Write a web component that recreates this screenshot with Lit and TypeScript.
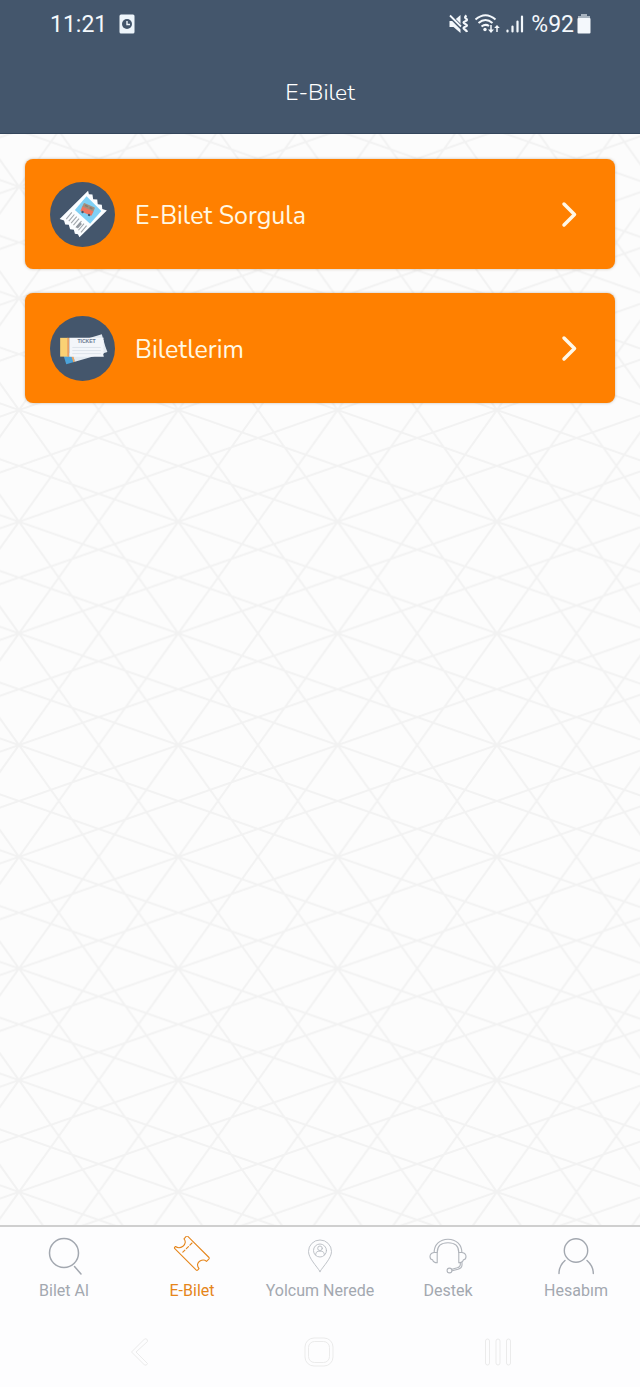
import { LitElement, html, css, svg, TemplateResult } from "lit";
import { customElement } from "lit/decorators.js";
import { classMap } from "lit/directives/class-map.js";

const queryTicket = svg`
  <circle cx="32" cy="32" r="32" fill="#44566c"/>
  <path d="M37.500 8.500L38.300 12L41.800 12.300L42.500 17L46.500 17.300L47 22L51 22.300L51.500 26.500L56 28L29 54.500L27.500 51.500L24.500 51L23.500 47L19.800 46.500L18.500 42L15 41.800L13.800 37.800L9.500 36.500Z" fill="#fbfdff"/>
  <path d="M36 14L50.500 28.500L39.500 41L24.500 27.500Z" fill="#7fd0f5"/>
  <g transform="rotate(24 36 27)">
    <rect x="31" y="22" width="12" height="6" rx="1" fill="#a58f7c"/>
    <path d="M31 26h12v4a1 1 0 0 1-1 1H32a1 1 0 0 1-1-1z" fill="#ef7660"/>
    <path d="M33 24h3M38 24h3" stroke="#8b7a70" stroke-width="1.500"/>
    <circle cx="33.500" cy="31" r="1.200" fill="#44566c"/><circle cx="40.500" cy="31" r="1.200" fill="#44566c"/>
  </g>
  <path d="M21.500 30l-5.500 6.500M24 32l-5.500 6.500M26.300 34l-5.500 6.500M28.600 36l-5.500 6.500M31 38.500l-5.500 6.500M33.500 41l-5.500 6.500M36 43l-5.500 6.500" stroke="#a3a8ad" stroke-width="1.100"/>
  <path d="M30.500 40.500l-4 4.500" stroke="#9298a0" stroke-width="2.500"/>`;

const ticketPair = svg`
  <circle cx="32" cy="32" r="32" fill="#44566c"/>
  <path d="M13 38l3 9.500 8.500-2.500-3-9z" fill="#4ba3da"/>
  <path d="M20.500 38l2.500 7.500 1.500-.5-2-8z" fill="#f2a55c"/>
  <path d="M22 36l2.500 9L44 39.500l12.500-4L54.500 30L51 18L38 22z" fill="#e3eaf1"/>
  <rect x="10" y="21.500" width="8" height="18.500" fill="#fad174"/>
  <rect x="17" y="21.500" width="2" height="18.500" fill="#e9a163"/>
  <path d="M19 21.500h34l-.6 1.500.6 1.500-.6 1.500.6 1.500-.6 1.500.6 1.500-.6 1.500.6 1.500-.6 1.500.6 1.500-.6 1.500.6 2H19z" fill="#f3f6fa"/>
  <path d="M22 31h28M22 34h28M22 37h28" stroke="#d9e0e8" stroke-width=".8"/>
  <text x="27" y="27" class="stamp">TICKET</text>`;

interface Tab { label: string; icon: TemplateResult; active?: boolean; }

const tabs: Tab[] = [
  { label: "Bilet Al", icon: svg`<circle cx="20" cy="17" r="14.500" stroke-width="1.500"/><path d="M30.500 30.500l6.500 7.500" stroke-width="1.500"/>` },
  { label: "E-Bilet", active: true, icon: svg`<path d="M3.500 10.500L2.600 11.400Q2.200 12 2.800 12.600L24.300 34.200Q25 34.800 25.600 34.200L27 32.600C24.500 29.500 25.500 26.500 28 25C30.500 23.500 33 24 34.500 25.300L37 22.800Q37.500 22.100 37 21.500L15.600 .200Q15-.500 14.400 .200L12 2.800C14 5 13.500 8.500 11 10.200C8.500 12 5.500 12 3.500 10.500Z"/><path d="M20 7L9.500 17.500" stroke-dasharray="3 2"/>` },
  { label: "Yolcum Nerede", icon: svg`<g stroke-width=".9" opacity=".75"><path d="M20 35.500C16.500 30 8.500 22 8.500 15.500a11.500 11.500 0 0 1 23 0C31.500 22 23.500 30 20 35.500z"/><circle cx="20" cy="14.500" r="6.500"/><circle cx="20" cy="12.300" r="2.300"/><path d="M15.700 19v-.8q0-2 2.300-3h4q2.300 1 2.300 3v.8"/></g>` },
  { label: "Destek", icon: svg`<g opacity=".85"><path d="M6.200 16.500C6 8.500 12 3.200 20 3.200s14 5.300 13.800 13.300"/><path d="M9.200 16.500C9.200 10.500 13 6.700 20 6.700s10.800 3.800 10.800 9.800"/><path d="M9.200 16.500v10.300c-3 0-4-1-4.700-3C2.500 23.500 2 22 2 20.500c0-2 1.500-3.500 4-4zM30.800 16.500v10.300c3 0 4-1 4.700-3 2-.3 2.500-1.800 2.500-3.300 0-2-1.500-3.500-4-4z"/><path d="M34 26.500v2.500q0 3-4 4.200l-5.800 1.600M32.300 26.700v2q0 2-3 3l-5.300 1.500"/><circle cx="21.500" cy="34.500" r="2.400"/></g>` },
  { label: "Hesabım", icon: svg`<circle cx="20" cy="14.500" r="11.700" stroke-width="1.400"/><path d="M9 24.500C5 28 3 32 3 37.500M31 24.500c4 3.500 6.300 7.500 6.300 13" stroke-width="1.400"/>` },
];

@customElement("app-root")
export class AppRoot extends LitElement {
  static styles = css`
    :host { display: block; }
    * { box-sizing: border-box; }
    .page { min-height: 100vh; display: flex; flex-direction: column; background: #fdfdfe; font-family: Roboto, sans-serif; }
    .top { background: #44566c; color: #fff; border-bottom: 1px solid #34465c; }
    .status { height: 48px; padding: 0 49px 0 50px; display: flex; align-items: center; justify-content: space-between; font-size: 23px; line-height: 28px; color: #f4f8fc; }
    .cluster { display: flex; align-items: center; gap: 3px; }
    .clock { gap: 12px; }
    .reading { padding-top: 2px; }
    .signals { display: flex; align-items: center; gap: 4px; padding-right: 4px; }
    svg { display: block; flex: none; }
    .title { margin: 0; height: 85px; padding-top: 4px; line-height: 81px; text-align: center; font-family: Nunito, Lato, sans-serif; font-weight: 300; font-size: 23px; }
    .main { flex: 1; position: relative; padding: 25px; background: #fcfcfc; }
    .lattice { position: absolute; inset: 0; width: 100%; height: 100%; }
    .cards { position: relative; display: grid; gap: 24px; }
    .card { display: flex; align-items: center; gap: 20px; height: 110px; padding: 0 36px 0 25px; border-radius: 8px; background: #ff8000; color: #fff8e4; text-decoration: none; font-family: Nunito, Lato, sans-serif; font-size: 25px; line-height: 32px; box-shadow: 0 0 3px rgba(90, 60, 20, .35); }
    .name { flex: 1; padding-top: 4px; }
    .stamp { font: 700 5px "Liberation Sans", sans-serif; fill: #6a788f; }
    .tabs { display: grid; grid-template-columns: repeat(5, 1fr); height: 92px; border-top: 2px solid #cfcfcf; background: #fdfdfe; }
    .tab { display: flex; flex-direction: column; align-items: center; gap: 5px; padding: 9px 0 0; color: #a3a8b0; text-decoration: none; font-size: 16px; line-height: 20px; white-space: nowrap; }
    .active { color: #e5851a; }
    .system { display: grid; grid-template-columns: repeat(3, 1fr); height: 70px; padding: 0 52px 0 50px; background: #fdfdfe; }
    .key { display: grid; place-items: center; border: 0; padding: 0; background: none; color: #ebebeb; }
  `;

  private card(icon: TemplateResult, name: string) {
    return html`<a class="card" href="#">
      <svg width="65" height="65" viewBox="0 0 64 64" aria-hidden="true">${icon}</svg>
      <span class="name">${name}</span>
      <svg width="20" height="28" viewBox="0 0 20 28" fill="none" stroke="#fff8e8" stroke-width="3.500" stroke-linecap="round" stroke-linejoin="round" aria-hidden="true"><path d="M5 4L15.500 14.500L5 25"/></svg>
    </a>`;
  }

  render() {
    return html`<div class="page">
      <header class="top">
        <div class="status">
          <div class="cluster clock">
            <span class="reading">11:21</span>
            <svg width="16" height="20" viewBox="0 0 16 20"><rect x=".5" y=".5" width="15" height="19" rx="1.500" fill="#eef5fb"/><circle cx="8" cy="10" r="5" fill="#44566c"/><path d="M8 7v3.500h3" fill="none" stroke="#eef5fb" stroke-width="1.400"/></svg>
          </div>
          <div class="cluster">
            <div class="signals">
              <svg width="22" height="20" viewBox="0 0 22 20"><path d="M1.500 7h4l7-6v18l-7-6h-4z" fill="#f4f8fc"/><path d="M0 0l14 14" stroke="#44566c" stroke-width="4"/><path d="M2 1.500l11 11" stroke="#f4f8fc" stroke-width="1.800"/><path d="M18.500 1.500c-3.500 2.500.5 3 .5 4.500s-3.500 1-3.500 2.500 3.500 1.500 3.500 3-3.500 1-3.500 2.500 3 1.500 3.500 4" fill="none" stroke="#f4f8fc" stroke-width="2.200"/></svg>
              <svg width="27" height="20" viewBox="0 0 27 20" fill="none" stroke="#f4f8fc" stroke-width="2"><path d="M1.500 5.500Q11.500-3 21.500 5.500M4.500 9Q11.500 3 18.500 9M7.500 12.500Q11.500 9.500 15 12"/><circle cx="11" cy="15.500" r="1.700" fill="#f4f8fc" stroke="none"/><path d="M17 11v6M23 18v-6" stroke-width="1.500"/><path d="M14 15.500h6l-3 3.500zM20.200 14h5.600L23 11z" fill="#f4f8fc" stroke="none"/></svg>
              <svg width="19" height="20" viewBox="0 0 19 20" stroke="#f4f8fc" stroke-width="2.200" stroke-linecap="round"><path d="M2.500 16.500v1M7.500 12.500v5M12.500 7.500v10M17 2.500v15"/></svg>
            </div>
            <span class="reading">%92</span>
            <svg width="14" height="20" viewBox="0 0 14 20"><path d="M4 0h6v2h3v3H1V2h3z" fill="#a8b3bf"/><rect x=".5" y="4" width="13" height="15.500" rx="1" fill="#f4f8fc"/></svg>
          </div>
        </div>
        <h1 class="title">E-Bilet</h1>
      </header>
      <main class="main">
        <svg class="lattice" aria-hidden="true">
          <defs>
            <pattern id="weave" x="19" y="276" width="159.300" height="111.700" patternUnits="userSpaceOnUse">
              <path d="M0 0L79.650 111.700L159.300 0M0 111.700L79.650 0L159.300 111.700M0 0L159.300 55.850L0 111.700M159.300 0L0 55.850L159.300 111.700" fill="none" stroke="#f2f2f2" stroke-width="2"/>
            </pattern>
          </defs>
          <rect width="100%" height="100%" fill="url(#weave)"/>
        </svg>
        <div class="cards">
          ${this.card(queryTicket, "E-Bilet Sorgula")}
          ${this.card(ticketPair, "Biletlerim")}
        </div>
      </main>
      <nav class="tabs">
        ${tabs.map((t) => html`<a href="#" class=${classMap({ tab: true, active: !!t.active })}>
          <svg width="40" height="40" viewBox="0 0 40 40" fill="none" stroke="currentColor" stroke-width="1.100" stroke-linecap="round" stroke-linejoin="round" aria-hidden="true">${t.icon}</svg>
          <span>${t.label}</span>
        </a>`)}
      </nav>
      <div class="system">
        <button class="key" aria-label="Geri"><svg width="20" height="30" viewBox="0 0 20 30" fill="none" stroke="currentColor" stroke-linejoin="round"><path d="M14.500 2L1.500 15L14.500 28Q16.500 29 17.500 26.500L6 15L17.500 4.500Q17.500 1 14.500 2z"/></svg></button>
        <button class="key" aria-label="Ana ekran"><svg width="30" height="30" viewBox="0 0 30 30" fill="none" stroke="currentColor"><rect x="1" y="1" width="28" height="28" rx="9"/><rect x="4.500" y="4.500" width="21" height="21" rx="6"/></svg></button>
        <button class="key" aria-label="Son uygulamalar"><svg width="28" height="28" viewBox="0 0 28 28" fill="none" stroke="currentColor"><rect x="1.500" y="1" width="4" height="26" rx="2"/><rect x="12" y="1" width="4" height="26" rx="2"/><rect x="22.500" y="1" width="4" height="26" rx="2"/></svg></button>
      </div>
    </div>`;
  }
}
